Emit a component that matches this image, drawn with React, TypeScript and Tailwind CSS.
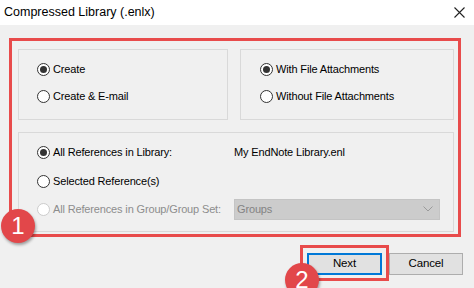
import React from 'react';

function Radio({ label, checked = false, disabled = false }: { label: string; checked?: boolean; disabled?: boolean }) {
  return (
    <div className="flex items-center h-[16px] gap-[3px]">
      <span
        className={`w-[13px] h-[13px] rounded-full border bg-white flex items-center justify-center ${
          disabled ? 'border-[#cccccc]' : 'border-[#333333]'
        }`}
      >
        {checked && <span className="w-[7px] h-[7px] rounded-full bg-[#333333]" />}
      </span>
      <span className={disabled ? 'text-[#8d8d8d]' : 'text-black'}>{label}</span>
    </div>
  );
}

function Badge({ n }: { n: string }) {
  return (
    <div className="w-[34px] h-[34px] rounded-full bg-[#e2474a] shadow-[1px_2px_3px_rgba(0,0,0,0.35)] flex items-center justify-center text-white text-[24px] leading-none tracking-normal font-['Liberation_Sans',sans-serif]">
      {n}
    </div>
  );
}

export default function App() {
  return (
    <div className="relative w-[474px] h-[288px] overflow-hidden bg-[#f0f0f0] font-['Liberation_Sans',Arial,sans-serif] text-[11px] tracking-[-0.15px] text-black">
      {/* title bar */}
      <div className="h-[25px] bg-white flex items-center justify-between pl-[4px] pr-[9px]">
        <span className="text-[12.5px] tracking-normal">Compressed Library (.enlx)</span>
        <svg width="11" height="11" viewBox="0 0 11 11" className="text-[#222]">
          <path d="M0.5 0.5 L10.5 10.5 M10.5 0.5 L0.5 10.5" stroke="currentColor" strokeWidth="1.1" />
        </svg>
      </div>

      {/* highlighted options area */}
      <div className="ml-[9px] mt-[13px] w-[452px] h-[199px] border-[3px] border-[#e84b4b] pl-[6px] pr-[3px] pt-[8px]">
        <div className="flex gap-[12px]">
          <div className="w-[210px] h-[71px] border border-[#d9d9d9] pl-[18px] pt-[11px] flex flex-col gap-[11px]">
            <Radio label="Create" checked />
            <Radio label="Create & E-mail" />
          </div>
          <div className="w-[214px] h-[71px] border border-[#d9d9d9] pl-[19px] pt-[11px] flex flex-col gap-[11px]">
            <Radio label="With File Attachments" checked />
            <Radio label="Without File Attachments" />
          </div>
        </div>
        <div className="mt-[12px] w-[436px] h-[100px] border border-[#d9d9d9] pl-[18px] pt-[11px] flex flex-col">
          <div className="flex items-center">
            <div className="w-[197px]">
              <Radio label="All References in Library:" checked />
            </div>
            <span>My EndNote Library.enl</span>
          </div>
          <div className="mt-[13px]">
            <Radio label="Selected Reference(s)" />
          </div>
          <div className="mt-[9px] flex items-center">
            <div className="w-[197px]">
              <Radio label="All References in Group/Group Set:" disabled />
            </div>
            <div className="w-[206px] h-[21px] bg-[#cccccc] border border-[#c4c4c4] flex items-center justify-between pl-[2px] pr-[6px] text-[#838383]">
              <span>Groups</span>
              <svg width="10" height="6" viewBox="0 0 10 6">
                <path d="M0.5 0.5 L5 5 L9.5 0.5" fill="none" stroke="#9a9a9a" strokeWidth="1" />
              </svg>
            </div>
          </div>
        </div>
      </div>

      {/* buttons */}
      <div className="flex justify-end gap-[7px] pr-[11px] mt-[16px]">
        <button className="w-[75px] h-[22px] bg-[#e1e1e1] border-2 border-[#0078d7] text-black text-[11.5px]">Next</button>
        <button className="w-[74px] h-[22px] bg-[#e1e1e1] border border-[#adadad] text-black text-[11.5px]">Cancel</button>
      </div>

      {/* annotations */}
      <div className="absolute left-[300px] top-[245px] w-[89px] h-[36px] border-[3px] border-[#e84b4b]" />
      <div className="absolute left-[1px] top-[209px]">
        <Badge n="1" />
      </div>
      <div className="absolute left-[285px] top-[263px]">
        <Badge n="2" />
      </div>
    </div>
  );
}
